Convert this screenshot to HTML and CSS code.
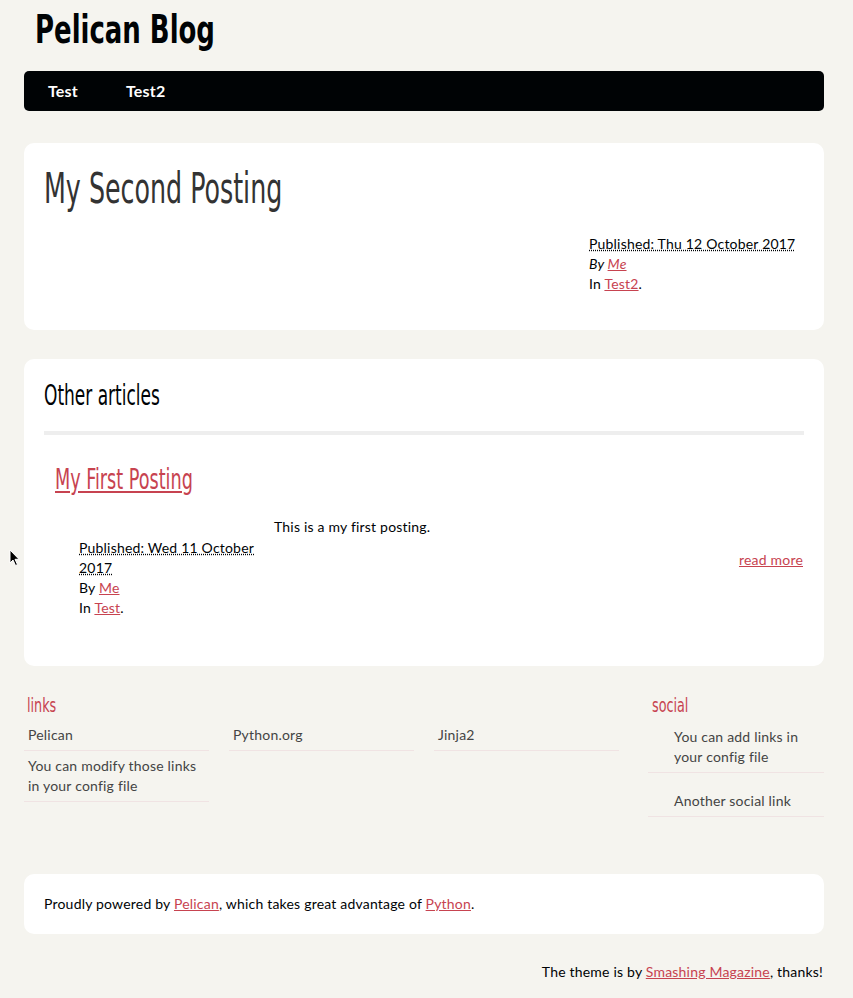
FILE: index.html
```html
<!DOCTYPE html>
<html lang="en">
<head>
    <meta charset="UTF-8">
    <title>My Second Posting</title>
    <link rel="stylesheet" href="styles.css">
</head>
<body>
    <div class="page">
        <header class="banner">
            <h1 class="brand"><a href="#">Pelican Blog</a></h1>
            <nav class="menu">
                <ul>
                    <li><a href="#">Test</a></li>
                    <li><a href="#">Test2</a></li>
                </ul>
            </nav>
        </header>

        <section class="card post">
            <h1 class="entry-title">My Second Posting</h1>
            <footer class="post-info">
                <abbr class="published" title="2017-10-12">Published: Thu 12 October 2017</abbr>
                <address class="author">By <a href="#">Me</a></address>
                <p>In <a href="#">Test2</a>.</p>
            </footer>
        </section>

        <section class="card others">
            <h1 class="section-title">Other articles</h1>
            <hr>
            <article class="entry">
                <h1 class="entry-link"><a href="#">My First Posting</a></h1>
                <div class="entry-body">
                    <footer class="entry-meta">
                        <abbr class="published" title="2017-10-11">Published: Wed 11 October 2017</abbr>
                        <p>By <a href="#">Me</a></p>
                        <p>In <a href="#">Test</a>.</p>
                    </footer>
                    <div class="entry-summary">
                        <p>This is a my first posting.</p>
                        <a class="read-more" href="#">read more</a>
                    </div>
                </div>
            </article>
        </section>

        <section class="extras">
            <div class="blogroll">
                <h2>links</h2>
                <ul>
                    <li><a href="#">Pelican</a></li>
                    <li><a href="#">Python.org</a></li>
                    <li><a href="#">Jinja2</a></li>
                    <li><a href="#">You can modify those links in your config file</a></li>
                </ul>
            </div>
            <div class="social">
                <h2>social</h2>
                <ul>
                    <li><a href="#">You can add links in your config file</a></li>
                    <li><a href="#">Another social link</a></li>
                </ul>
            </div>
        </section>

        <footer class="card contentinfo">
            Proudly powered by <a href="#">Pelican</a>, which takes great advantage of <a href="#">Python</a>.
        </footer>
        <p class="credit">The theme is by <a href="#">Smashing Magazine</a>, thanks!</p>
    </div>

    <svg class="cursor" width="12" height="18" viewBox="0 0 12 18">
        <path d="M1 1 L1 14 L4 11 L6.5 16.5 L8.5 15.6 L6 10.3 L10 10.3 Z" fill="#000" stroke="#fff" stroke-width="1"/>
    </svg>
</body>
</html>
```

FILE: styles.css
```css
body { margin: 0; background: #f5f4ef; color: #000305; font: 14px/20px Lato, "Noto Sans", sans-serif; letter-spacing: 0.2px; }
a { color: #c74350; }
p { margin: 0; }
ul { list-style: none; margin: 0; padding: 0; }
abbr.published { text-decoration: underline dotted; }
address { font-style: normal; }

.page { width: 800px; margin-left: 24px; }

/* headings in a condensed face, squeezed further to look like Yanone Kaffeesatz */
.brand, .entry-title, .section-title, .entry-link, .extras h2 {
    font-family: "DejaVu Sans Condensed", sans-serif;
    font-weight: normal;
    line-height: 1;
    letter-spacing: 0;
    transform-origin: left center;
}

.banner { padding-top: 10px; }
.brand { margin: 0 0 22px 11px; font-size: 39px; font-weight: bold; transform: scaleX(0.74); }
.brand a { color: #000305; text-decoration: none; }

.menu { background: #000305; height: 40px; border-radius: 5px; margin-bottom: 32px; }
.menu ul { display: flex; }
.menu a { display: block; padding: 5px 24px; line-height: 30px; color: #fff; font-size: 16px; font-weight: bold; text-decoration: none; }

.card { background: #fff; border-radius: 10px; padding: 20px; }

.post { margin-bottom: 29px; }
.entry-title { margin: 4px 0 24px; font-size: 43px; color: #333; transform: scaleX(0.655); }
.post-info { width: 215px; margin: 0 0 16px auto; }
.post-info .author { font-style: italic; }

.section-title { margin: 3px 0 21px; font-size: 28px; transform: scaleX(0.675); }
.others hr { border: 0; height: 4px; background: #eee; margin: 0; }
.entry-link { margin: 31px 0 23px 11px; font-size: 28px; transform: scaleX(0.7); }
.entry-link a { color: #c74350; }
.entry-body { display: flex; gap: 15px; padding-left: 35px; padding-bottom: 28px; }
.entry-meta { width: 180px; margin-top: 21px; }
.entry-summary { flex: 1; }
.read-more { display: block; text-align: right; margin: 13px 1px 0 0; }

.extras { display: flex; justify-content: space-between; margin-top: 29px; margin-bottom: 57px; }
.extras h2 { margin: 0 0 5px 3px; font-size: 20px; color: #c74350; transform: scaleX(0.71); }
.extras a { color: #444; text-decoration: none; }
.extras li { border-bottom: 1px solid #f0e3e3; }
.blogroll ul { display: grid; grid-template-columns: repeat(3, 185px); column-gap: 20px; align-items: start; }
.blogroll li { padding: 5px 4px; }
.social { width: 176px; }
.social h2 { margin-left: 4px; }
.social li { padding: 7px 4px 5px 26px; }
.social li + li { padding-top: 18px; }

.contentinfo { margin-bottom: 28px; }
.credit { text-align: right; margin-right: 1px; }

.cursor { position: absolute; left: 9px; top: 549px; }
```
